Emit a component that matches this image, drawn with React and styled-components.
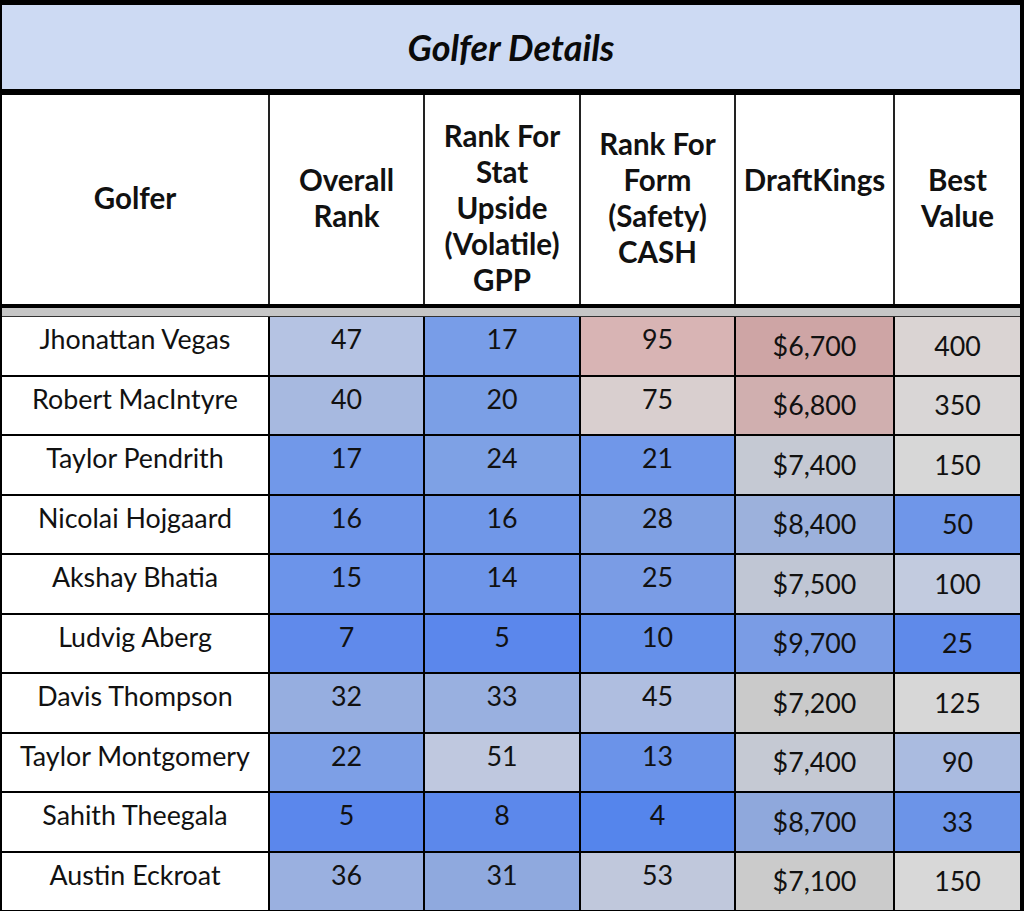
import React from 'react'
import styled, { createGlobalStyle } from 'styled-components';

const Global = createGlobalStyle`
  body{
    margin: 0;
    font-family: Lato, "Noto Sans", sans-serif;
    color: #111;
    background: #fff;
    overflow: hidden;
  }
`;

const COLS = '266px 155px 156px 155px 159px 127px';

const headers = [
  { lines: ['Golfer'] },
  { lines: ['Overall', 'Rank'] },
  { lines: ['Rank For', 'Stat', 'Upside', '(Volatile)', 'GPP'], top: 20 },
  { lines: ['Rank For', 'Form', '(Safety)', 'CASH'] },
  { lines: ['DraftKings'], bottom: 40 },
  { lines: ['Best', 'Value'] },
];

const rows = [
  ['Jhonattan Vegas', ['47', '#b5c3e3'], ['17', '#789de8'], ['95', '#d8b4b4'], ['$6,700', '#cea5a5'], ['400', '#dad4d3']],
  ['Robert MacIntyre', ['40', '#a7b9e0'], ['20', '#7b9fe6'], ['75', '#d9cfcf'], ['$6,800', '#d0afaf'], ['350', '#d9d6d6']],
  ['Taylor Pendrith', ['17', '#7198e9'], ['24', '#7ea1e5'], ['21', '#7097e9'], ['$7,400', '#c5c9d3'], ['150', '#d7d7d7']],
  ['Nicolai Hojgaard', ['16', '#6e95e9'], ['16', '#7097e8'], ['28', '#7fa0e3'], ['$8,400', '#9cb1dc'], ['50', '#6f96e9']],
  ['Akshay Bhatia', ['15', '#6c94ea'], ['14', '#6e95e9'], ['25', '#7a9ce5'], ['$7,500', '#c0c6d4'], ['100', '#c2cbdf']],
  ['Ludvig Aberg', ['7', '#608aeb'], ['5', '#5b87ec'], ['10', '#6590ea'], ['$9,700', '#7a9ce5'], ['25', '#5f8aea']],
  ['Davis Thompson', ['32', '#96aee0'], ['33', '#99b0e0'], ['45', '#afbee0'], ['$7,200', '#cacaca'], ['125', '#d7d7d7']],
  ['Taylor Montgomery', ['22', '#7d9fe6'], ['51', '#bfc8df'], ['13', '#6b93e9'], ['$7,400', '#c5c9d3'], ['90', '#aabbe0']],
  ['Sahith Theegala', ['5', '#5b87ec'], ['8', '#5c88eb'], ['4', '#5585ec'], ['$8,700', '#8fa8dc'], ['33', '#6c94e8']],
  ['Austin Eckroat', ['36', '#9ab0e0'], ['31', '#8fa9de'], ['53', '#c0c8dc'], ['$7,100', '#cbcbcb'], ['150', '#d8d8d8']],
];

const App = () => {
  return (
    <Sheet>
      <Global />
      <Title>Golfer Details</Title>
      <HeadRow>
        {headers.map((h, i) => (
          <HeadCell key={i} $top={h.top || 0} $bottom={h.bottom || 4}>
            {h.lines.map((l) => <span key={l}>{l}</span>)}
          </HeadCell>
        ))}
      </HeadRow>
      <Divider />
      {rows.map((r) => (
        <Row key={r[0]}>
          <Cell $bg="#fff">{r[0]}</Cell>
          {r.slice(1).map(([v, bg], i) => (
            <Cell key={i} $bg={bg} $center={i >= 3}>{v}</Cell>
          ))}
        </Row>
      ))}
    </Sheet>
  )
}

const Sheet = styled.div`
  width: 1024px;
  box-sizing: border-box;
  border-top: 5px solid #000;
  border-left: 2px solid #000;
  border-right: 4px solid #000;
`;

const Title = styled.div`
  height: 84px;
  background: #cddaf3;
  border-bottom: 6px solid #000;
  display: flex;
  align-items: center;
  justify-content: center;
  font-size: 36px;
  font-weight: 700;
  font-style: italic;
  color: #0a0a0a;
`;

const HeadRow = styled.div`
  display: grid;
  grid-template-columns: ${COLS};
  height: 209px;
  border-bottom: 4px solid #000;
  background: #fff;
`;

const HeadCell = styled.div`
  display: flex;
  flex-direction: column;
  align-items: center;
  justify-content: center;
  text-align: center;
  font-size: 29.5px;
  font-weight: 700;
  line-height: 36px;
  padding-top: ${(p) => p.$top}px;
  padding-bottom: ${(p) => p.$bottom}px;
  & + & {
    border-left: 2px solid #222;
  }
  span{
    white-space: nowrap;
  }
`;

const Divider = styled.div`
  height: 8px;
  background: #c6c6c6;
  border-bottom: 1px solid #333;
`;

const Row = styled.div`
  display: grid;
  grid-template-columns: ${COLS};
  height: 57.5px;
  border-bottom: 2px solid #000;
`;

const Cell = styled.div`
  background: ${(p) => p.$bg};
  display: flex;
  justify-content: center;
  align-items: ${(p) => (p.$center ? 'center' : 'flex-start')};
  padding-top: ${(p) => (p.$center ? 0 : 6)}px;
  box-sizing: border-box;
  font-size: 26.8px;
  line-height: 32px;
  white-space: nowrap;
  & + & {
    border-left: 2px solid #000;
  }
`;

export default App
